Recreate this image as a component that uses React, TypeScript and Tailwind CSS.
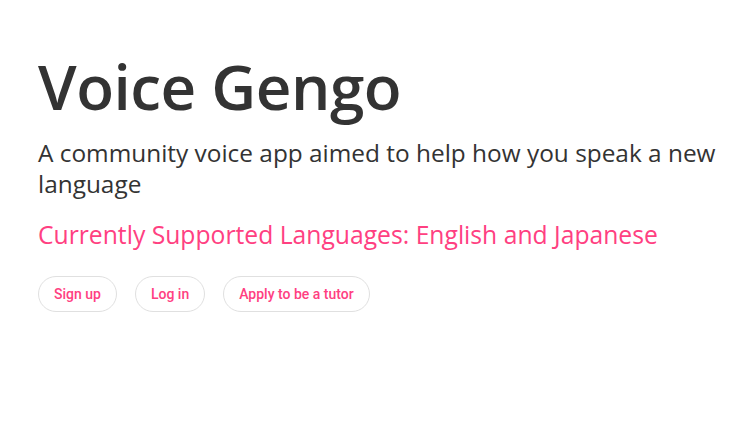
export default function App() {
  return (
    <div className="min-h-[440px] bg-white pl-[38px] pr-[16px] pt-[47px] font-['Open_Sans',sans-serif] text-[#333]">
      <h1 className="text-[62px] font-semibold leading-[78px] tracking-[-0.5px]">Voice Gengo</h1>
      <p className="mt-[12px] max-w-[698px] text-[24.4px] leading-[31px]">
        A community voice app aimed to help how you speak a new language
      </p>
      <p className="mt-[20px] text-[24.7px] leading-[31px] text-[#ff4081]">
        Currently Supported Languages: English and Japanese
      </p>
      <div className="mt-[26px] flex gap-[18px] font-['Roboto',sans-serif]">
        <button className="h-[36px] rounded-full border border-[#e0e0e0] px-[15px] text-[14px] font-medium text-[#ff4081]">
          Sign up
        </button>
        <button className="h-[36px] rounded-full border border-[#e0e0e0] px-[15px] text-[14px] font-medium text-[#ff4081]">
          Log in
        </button>
        <button className="h-[36px] rounded-full border border-[#e0e0e0] px-[15px] text-[14px] font-medium text-[#ff4081]">
          Apply to be a tutor
        </button>
      </div>
    </div>
  );
}
